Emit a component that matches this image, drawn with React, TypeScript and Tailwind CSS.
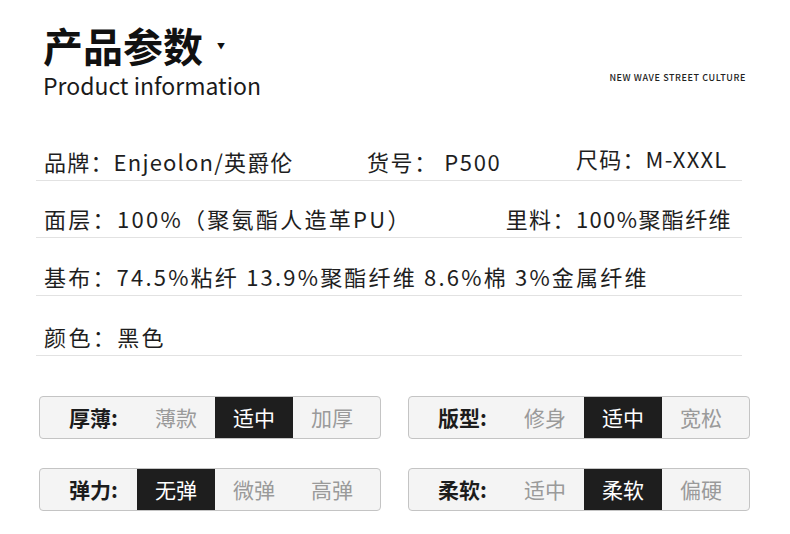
import React from "react";

const FONT = { fontFamily: '"Noto Sans CJK SC", "Noto Sans", sans-serif' };

function Seg({ label, options, selected }: { label: string; options: string[]; selected: number }) {
  return (
    <div className="flex h-[43px] w-[342px] items-stretch overflow-hidden rounded-[4px] border border-[#c4c4c4] bg-[#f4f4f4]">
      <div className="flex w-[97px] items-center pl-[29px] text-[21px] font-bold text-[#1c1c1c]">{label}</div>
      {options.map((o, i) => (
        <div
          key={o + i}
          className={
            i === selected
              ? "flex w-[78px] items-center justify-center bg-[#1e1e1e] text-[21px] text-white"
              : "flex w-[78px] items-center justify-center text-[21px] text-[#9a9a9a]"
          }
        >
          {o}
        </div>
      ))}
    </div>
  );
}

function Row({ children, h }: { children: React.ReactNode; h: string }) {
  return (
    <div className={`flex items-end border-b border-[#e2e2e2] pb-[3px] pl-[8px] text-[22px] leading-[32px] text-[#1e1e1e] ${h}`}>
      {children}
    </div>
  );
}

export default function App() {
  return (
    <div className="h-[534px] w-[790px] overflow-hidden bg-white" style={FONT}>
      <div className="flex items-start justify-between pl-[43px] pr-[44px] pt-[24px]">
        <div>
          <div className="flex items-center">
            <span className="text-[40px] font-bold leading-[42px] text-[#111]">产品参数</span>
            <span className="ml-[14px] mt-[2px] text-[8px] text-[#111]">▼</span>
          </div>
          <div className="mt-[2px] text-[23px] leading-[34px] text-[#1a1a1a]">Product information</div>
        </div>
        <div className="mt-[47px] text-[9px] font-medium tracking-[0.6px] text-[#222]">NEW WAVE STREET CULTURE</div>
      </div>

      <div className="mx-[36px] mt-[27px] w-[706px]">
        <Row h="h-[52px]">
          <div className="w-[323px] tracking-[1.2px]">品牌：Enjeolon/英爵伦</div>
          <div className="w-[209px] tracking-[1.6px]">货号： P500</div>
          <div className="mb-[3px] tracking-[1.2px]">尺码：M-XXXL</div>
        </Row>
        <Row h="h-[57px]">
          <div className="flex-1 tracking-[2.3px]">面层：100%（聚氨酯人造革PU）</div>
          <div className="pr-[10px] tracking-[1.4px]">里料：100%聚酯纤维</div>
        </Row>
        <Row h="h-[58px]">
          <div className="tracking-[2.2px]">基布：74.5%粘纤 13.9%聚酯纤维 8.6%棉 3%金属纤维</div>
        </Row>
        <Row h="h-[60px]">
          <div className="tracking-[2.4px]">颜色：黑色</div>
        </Row>
      </div>

      <div className="mt-[40px] flex flex-col gap-[29px] pl-[39px]">
        <div className="flex gap-[27px]">
          <Seg label="厚薄:" options={["薄款", "适中", "加厚"]} selected={1} />
          <Seg label="版型:" options={["修身", "适中", "宽松"]} selected={1} />
        </div>
        <div className="flex gap-[27px]">
          <Seg label="弹力:" options={["无弹", "微弹", "高弹"]} selected={0} />
          <Seg label="柔软:" options={["适中", "柔软", "偏硬"]} selected={1} />
        </div>
      </div>
    </div>
  );
}
